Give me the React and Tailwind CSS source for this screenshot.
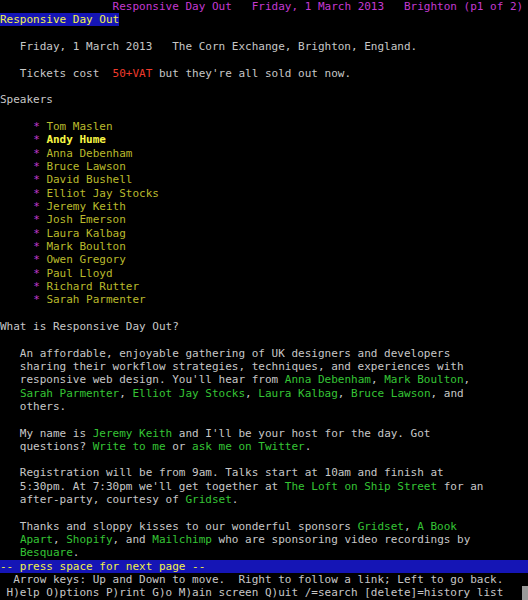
const FG = "text-[#c7c7c7]";

// segments: plain strings are default text, [text, cls] pairs are colored
const link = (t) => [t, "text-[#35c435]"];

const speakers = [
  "Tom Maslen",
  "Andy Hume",
  "Anna Debenham",
  "Bruce Lawson",
  "David Bushell",
  "Elliot Jay Stocks",
  "Jeremy Keith",
  "Josh Emerson",
  "Laura Kalbag",
  "Mark Boulton",
  "Owen Gregory",
  "Paul Lloyd",
  "Richard Rutter",
  "Sarah Parmenter",
];

const body = [
  [],
  ["   Friday, 1 March 2013   The Corn Exchange, Brighton, England."],
  [],
  ["   Tickets cost  ", ["50+VAT", "text-[#f03b2c]"], " but they're all sold out now."],
  [],
  ["Speakers"],
  [],
  ...speakers.map((name, i) => [
    "     ",
    ["*", "text-[#c43ad2]"],
    " ",
    [name, i === 1 ? "text-[#f7f745] font-bold" : "text-[#baba2c]"],
  ]),
  [],
  ["What is Responsive Day Out?"],
  [],
  ["   An affordable, enjoyable gathering of UK designers and developers"],
  ["   sharing their workflow strategies, techniques, and experiences with"],
  ["   responsive web design. You'll hear from ", link("Anna Debenham"), ", ", link("Mark Boulton"), ","],
  ["   ", link("Sarah Parmenter"), ", ", link("Elliot Jay Stocks"), ", ", link("Laura Kalbag"), ", ", link("Bruce Lawson"), ", and"],
  ["   others."],
  [],
  ["   My name is ", link("Jeremy Keith"), " and I'll be your host for the day. Got"],
  ["   questions? ", link("Write to me"), " or ", link("ask me on Twitter"), "."],
  [],
  ["   Registration will be from 9am. Talks start at 10am and finish at"],
  ["   5:30pm. At 7:30pm we'll get together at ", link("The Loft on Ship Street"), " for an"],
  ["   after-party, courtesy of ", link("Gridset"), "."],
  [],
  ["   Thanks and sloppy kisses to our wonderful sponsors ", link("Gridset"), ", ", link("A Book")],
  ["   ", link("Apart"), ", ", link("Shopify"), ", and ", link("Mailchimp"), " who are sponsoring video recordings by"],
  ["   ", link("Besquare"), "."],
];

function Row({ segs, className = "" }) {
  return (
    <div className={`h-[13.333px] whitespace-pre ${className}`}>
      {segs.map((s, i) =>
        typeof s === "string" ? (
          <span key={i}>{s}</span>
        ) : (
          <span key={i} className={s[1]}>
            {s[0]}
          </span>
        )
      )}
    </div>
  );
}

export default function App() {
  return (
    <div
      className={`relative flex h-[600px] w-[528px] flex-col overflow-hidden bg-black text-[11px] leading-[13.333px] ${FG}`}
      style={{ fontFamily: '"DejaVu Sans Mono", "Liberation Mono", monospace' }}
    >
      <Row
        segs={[
          "                 ",
          ["Responsive Day Out   Friday, 1 March 2013   Brighton (p1 of 2)", "text-[#c43ad2]"],
        ]}
      />
      <Row segs={[["Responsive Day Out", "bg-[#1515b5] text-[#f2f24a]"]]} />
      {body.map((segs, i) => (
        <Row key={i} segs={segs} />
      ))}
      <Row
        segs={[["-- press space for next page --", "text-[#f2f24a]"]]}
        className="bg-[#1515b5]"
      />
      <Row segs={["  Arrow keys: Up and Down to move.  Right to follow a link; Left to go back."]} />
      <Row segs={[" H)elp O)ptions P)rint G)o M)ain screen Q)uit /=search [delete]=history list"]} />
      <div className="absolute bottom-0 right-0 h-[14px] w-[6px] bg-[#9a9a9a]" />
    </div>
  );
}
